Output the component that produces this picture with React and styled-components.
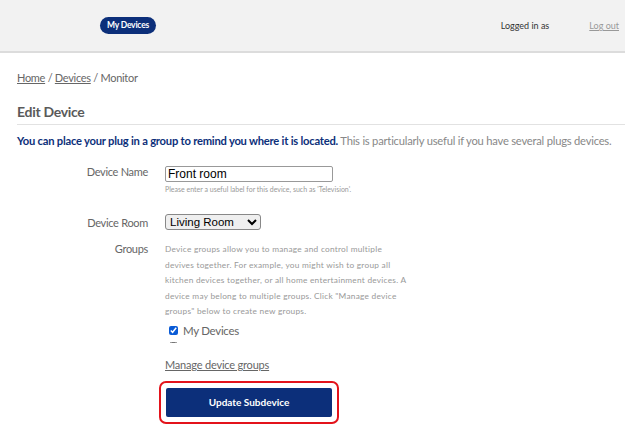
import React, { useState } from 'react'
import styled, { createGlobalStyle } from 'styled-components'

const GlobalStyle = createGlobalStyle`
    html, body {
        margin: 0;
        padding: 0;
        background: #fff;
        font-family: Lato, "Open Sans", sans-serif;
        color: #555;
        overflow: hidden;
    }
`

const Header = styled.header`
    height: 51px;
    background-color: #f2f2f2;
    border-bottom: 2px solid #dcdcdc;
    display: flex;
    align-items: center;
    padding: 0 6px 0 100px;
    font-size: 9px;
`

const Pill = styled.a`
    background-color: #0c2f7a;
    color: #fff;
    font-weight: 700;
    font-size: 8.5px;
    letter-spacing: -0.2px;
    border-radius: 10px;
    padding: 3px 7px 4px;
    text-decoration: none;
`

const UserBox = styled.div`
    margin-left: auto;
    display: flex;
    align-items: center;
    gap: 40px;
    color: #333;
    a{
        color: #999;
        text-decoration: underline;
    }
`

const Main = styled.main`
    padding: 18px 0 0 17px;
`

const Crumbs = styled.div`
    font-size: 11px;
    letter-spacing: -0.3px;
    color: #666;
    a{
        color: #666;
        text-decoration: underline;
    }
`

const Title = styled.h2`
    margin: 19px 0 0;
    padding-bottom: 4px;
    font-size: 14px;
    letter-spacing: -0.3px;
    font-weight: 700;
    color: #5a5a5a;
    border-bottom: 1px solid #e2e2e2;
`

const Intro = styled.p`
    margin: 9px 0 0;
    font-size: 11.2px;
    letter-spacing: -0.22px;
    color: #888;
    white-space: nowrap;
    strong{
        color: #0c2f7a;
        font-weight: 700;
    }
`

const Form = styled.form`
    margin-top: 15px;
    display: grid;
    grid-template-columns: 131px 250px;
    column-gap: 17px;
    align-items: start;
`

const Label = styled.label`
    text-align: right;
    font-size: 11px;
    letter-spacing: -0.3px;
    color: #666;
    padding-top: ${p => p.$top || 0}px;
    margin-top: ${p => p.$gap || 0}px;
`

const Field = styled.div`
    margin-top: ${p => p.$gap || 0}px;
`

const TextInput = styled.input`
    box-sizing: border-box;
    width: 168px;
    height: 16px;
    border: 1px solid #999;
    border-radius: 2px;
    padding: 0 2px;
    font-family: "Liberation Sans", Arial, sans-serif;
    font-size: 12px;
    color: #000;
    outline: none;
`

const Hint = styled.div`
    margin-top: 3px;
    font-size: 7px;
    color: #999;
    white-space: nowrap;
`

const Select = styled.select`
    box-sizing: border-box;
    width: 96px;
    height: 16px;
    border: 1px solid #888;
    border-radius: 3px;
    background: #efefef;
    font-family: "Liberation Sans", Arial, sans-serif;
    font-size: 11.5px;
    color: #000;
    padding: 0;
`

const Desc = styled.div`
    width: 244px;
    font-size: 8.3px;
    letter-spacing: 0.25px;
    line-height: 15.6px;
    color: #999;
    margin-top: 1px;
`

const CheckList = styled.div`
    height: 20px;
    overflow: hidden;
    margin-top: 3px;
    padding-left: 4px;
`

const CheckRow = styled.label`
    display: flex;
    align-items: center;
    gap: 5px;
    height: 16px;
    font-size: 11.5px;
    letter-spacing: -0.3px;
    color: #666;
    input{
        margin: 0;
        width: 9px;
        height: 9px;
        accent-color: #0a5bd6;
    }
`

const ManageLink = styled.a`
    display: block;
    margin-top: 15px;
    font-size: 11px;
    letter-spacing: -0.2px;
    color: #666;
    text-decoration: underline;
`

const Highlight = styled.div`
    margin: 10px 0 0 -6px;
    width: 166px;
    padding: 5px;
    border: 2px solid #e3131b;
    border-radius: 7px;
`

const SubmitButton = styled.button`
    display: block;
    width: 100%;
    height: 29px;
    border: none;
    border-radius: 2px;
    background-color: #0c2f7a;
    color: #fff;
    font-family: Lato, sans-serif;
    font-weight: 700;
    font-size: 10px;
    cursor: pointer;
`

export default function App() {
    const [name, setName] = useState('Front room')
    const [room, setRoom] = useState('Living Room')
    const [groups, setGroups] = useState({ mine: true, other: false })

    return (
        <>
            <GlobalStyle />
            <Header>
                <Pill href="#">My Devices</Pill>
                <UserBox>
                    <span>Logged in as</span>
                    <a href="#">Log out</a>
                </UserBox>
            </Header>
            <Main>
                <Crumbs>
                    <a href="#">Home</a> / <a href="#">Devices</a> / Monitor
                </Crumbs>
                <Title>Edit Device</Title>
                <Intro>
                    <strong>You can place your plug in a group to remind you where it is located.</strong> This is particularly useful if you have several plugs devices.
                </Intro>
                <Form onSubmit={e => e.preventDefault()}>
                    <Label $top={3}>Device Name</Label>
                    <Field>
                        <TextInput value={name} onChange={e => setName(e.target.value)} />
                        <Hint>Please enter a useful label for this device, such as 'Television'.</Hint>
                    </Field>

                    <Label $gap={17} $top={6}>Device Room</Label>
                    <Field $gap={17}>
                        <Select value={room} onChange={e => setRoom(e.target.value)}>
                            <option>Living Room</option>
                            <option>Kitchen</option>
                            <option>Bedroom</option>
                        </Select>
                    </Field>

                    <Label $gap={12}>Groups</Label>
                    <Field $gap={11}>
                        <Desc>
                            Device groups allow you to manage and control multiple devives together. For example, you might wish to group all kitchen devices together, or all home entertainment devices. A device may belong to multiple groups. Click "Manage device groups" below to create new groups.
                        </Desc>
                        <CheckList>
                            <CheckRow>
                                <input type="checkbox" checked={groups.mine} onChange={e => setGroups({ ...groups, mine: e.target.checked })} />
                                My Devices
                            </CheckRow>
                            <CheckRow>
                                <input type="checkbox" aria-label="Other group" checked={groups.other} onChange={e => setGroups({ ...groups, other: e.target.checked })} />
                            </CheckRow>
                        </CheckList>
                        <ManageLink href="#">Manage device groups</ManageLink>
                        <Highlight>
                            <SubmitButton type="submit">Update Subdevice</SubmitButton>
                        </Highlight>
                    </Field>
                </Form>
            </Main>
        </>
    )
}
